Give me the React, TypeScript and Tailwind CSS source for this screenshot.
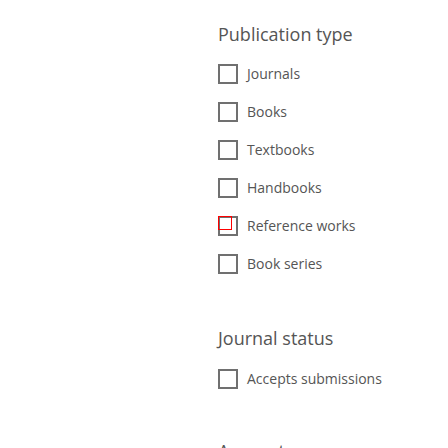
import React from "react";

const font = { fontFamily: '"Open Sans", "Noto Sans", sans-serif' };

function Row({ label, focus }: { label: string; focus?: boolean }) {
  return (
    <div className="flex items-center gap-[9px] h-[20px]">
      <div className="relative w-[20px] h-[20px] border-2 border-[#707070] bg-white shrink-0">
        {focus && (
          <div className="absolute left-[-2px] top-[-2px] w-[14px] h-[14px] border border-[#ff0000]" />
        )}
      </div>
      <span className="text-[14px] leading-[20px] text-[#555555]">{label}</span>
    </div>
  );
}

export default function App() {
  return (
    <div className="w-[448px] h-[448px] overflow-hidden bg-white pl-[218px] pt-[22px]" style={font}>
      <h2 className="text-[18px] leading-[24px] text-[#555555]">Publication type</h2>
      <div className="mt-[18px] flex flex-col gap-[18px]">
        <Row label="Journals" />
        <Row label="Books" />
        <Row label="Textbooks" />
        <Row label="Handbooks" />
        <Row label="Reference works" focus />
        <Row label="Book series" />
      </div>
      <h2 className="mt-[52px] text-[18px] leading-[24px] text-[#555555]">Journal status</h2>
      <div className="mt-[19px] flex flex-col gap-[18px]">
        <Row label="Accepts submissions" />
      </div>
      <h2 className="mt-[50px] text-[18px] leading-[24px] text-[#555555]">Access type</h2>
    </div>
  );
}
